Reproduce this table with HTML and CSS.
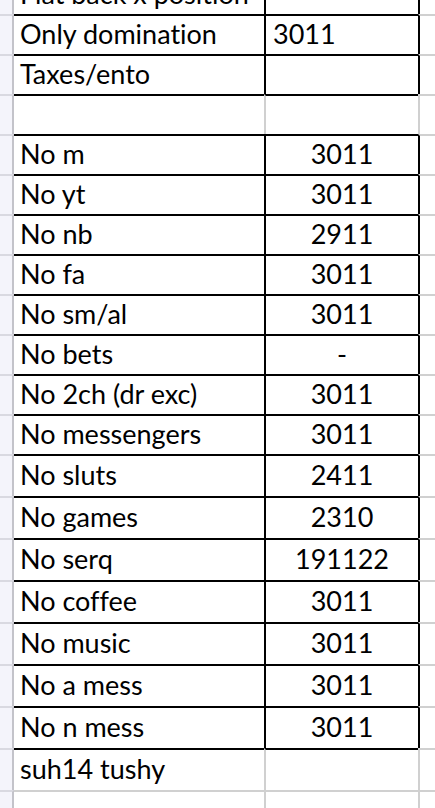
FILE: index.html
```html
<!DOCTYPE html>
<html>
<head>
<meta charset="utf-8">
<link rel="stylesheet" href="styles.css">
</head>
<body>
<div class="sheet">
  <div class="row k"><div class="gut"></div><div class="c a">Flat back x position</div><div class="c b"></div><div class="c cc"></div></div>
  <div class="row k"><div class="gut"></div><div class="c a">Only domination</div><div class="c b left">3011</div><div class="c cc"></div></div>
  <div class="row k"><div class="gut"></div><div class="c a">Taxes/ento</div><div class="c b"></div><div class="c cc"></div></div>
  <div class="row kt"><div class="gut"></div><div class="c a"></div><div class="c b"></div><div class="c cc"></div></div>
  <div class="row k"><div class="gut"></div><div class="c a">No m</div><div class="c b">3011</div><div class="c cc"></div></div>
  <div class="row k"><div class="gut"></div><div class="c a">No yt</div><div class="c b">3011</div><div class="c cc"></div></div>
  <div class="row k"><div class="gut"></div><div class="c a">No nb</div><div class="c b">2911</div><div class="c cc"></div></div>
  <div class="row k"><div class="gut"></div><div class="c a">No fa</div><div class="c b">3011</div><div class="c cc"></div></div>
  <div class="row k"><div class="gut"></div><div class="c a">No sm/al</div><div class="c b">3011</div><div class="c cc"></div></div>
  <div class="row k"><div class="gut"></div><div class="c a">No bets</div><div class="c b">-</div><div class="c cc"></div></div>
  <div class="row k"><div class="gut"></div><div class="c a">No 2ch (dr exc)</div><div class="c b">3011</div><div class="c cc"></div></div>
  <div class="row k"><div class="gut"></div><div class="c a">No messengers</div><div class="c b">3011</div><div class="c cc"></div></div>
  <div class="row k tall"><div class="gut"></div><div class="c a">No sluts</div><div class="c b">2411</div><div class="c cc"></div></div>
  <div class="row k tall"><div class="gut"></div><div class="c a">No games</div><div class="c b">2310</div><div class="c cc"></div></div>
  <div class="row k tall"><div class="gut"></div><div class="c a">No serq</div><div class="c b">191122</div><div class="c cc"></div></div>
  <div class="row k tall"><div class="gut"></div><div class="c a">No coffee</div><div class="c b">3011</div><div class="c cc"></div></div>
  <div class="row k tall"><div class="gut"></div><div class="c a">No music</div><div class="c b">3011</div><div class="c cc"></div></div>
  <div class="row k tall"><div class="gut"></div><div class="c a">No a mess</div><div class="c b">3011</div><div class="c cc"></div></div>
  <div class="row k tall"><div class="gut"></div><div class="c a">No n mess</div><div class="c b">3011</div><div class="c cc"></div></div>
  <div class="row kt tall"><div class="gut"></div><div class="c a">suh14 tushy</div><div class="c b"></div><div class="c cc"></div></div>
  <div class="row tall"><div class="gut"></div><div class="c a"></div><div class="c b"></div><div class="c cc"></div></div>
</div>
</body>
</html>
```

FILE: styles.css
```css
html, body {
  margin: 0;
  padding: 0;
  background: #ffffff;
  overflow: hidden;
}

body {
  font-family: Lato, "Liberation Sans", sans-serif;
  color: #000000;
  font-variant-ligatures: none;
  font-feature-settings: "liga" 0, "clig" 0;
}

.sheet {
  margin-top: -26px;
}

.row {
  display: flex;
  height: 40px;
}

.row.tall {
  height: 42px;
}

.gut {
  flex: none;
  width: 12px;
  background: #f4f4fb;
  border-top: 2px solid #d9d9e1;
  border-right: 2px solid #c3c3ca;
}

.c {
  box-sizing: border-box;
  display: flex;
  align-items: center;
  border-top: 2px solid #d0d0d0;
  font-size: 27px;
  line-height: 1.2;
  padding-bottom: 2px;
  white-space: nowrap;
  overflow: hidden;
}

.a {
  flex: none;
  width: 250px;
  padding-left: 6px;
}

.b {
  flex: none;
  width: 154px;
  border-left: 2px solid #d0d0d0;
  justify-content: center;
}

.b.left {
  justify-content: flex-start;
  padding-left: 7px;
}

.cc {
  flex: 1;
  border-left: 2px solid #d0d0d0;
}

.k .a,
.k .b,
.kt .a,
.kt .b {
  border-top-color: #000000;
}

.k .b,
.k .cc {
  border-left-color: #000000;
}
```
